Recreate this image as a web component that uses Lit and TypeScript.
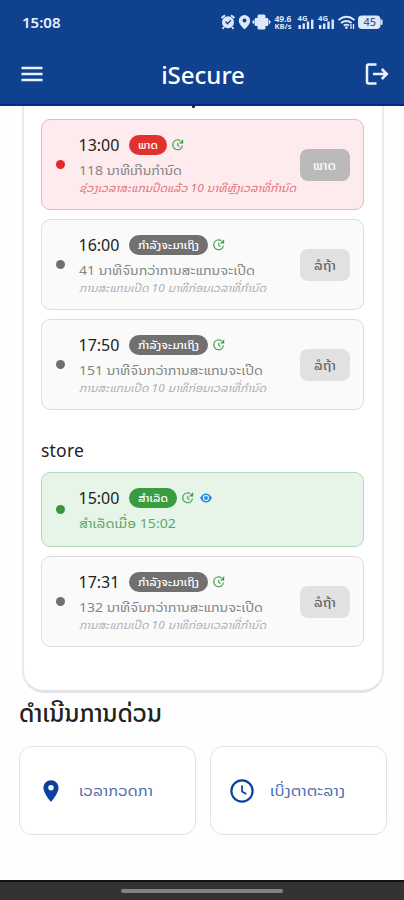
import { LitElement, html, css, svg, nothing } from "lit";
import { customElement, property } from "lit/decorators.js";

type Tone = "missed" | "upcoming" | "done";

interface Slot {
  time: string;
  tone: Tone;
  badge: string;
  badgeWidth: number;
  detail: string;
  detailWidth: number;
  note?: string;
  noteWidth?: number;
  action?: string;
  actionWidth?: number;
}

/* A single line of text set to a known advance width. */
const line = (text: string, width: number, cls: string) => html`<svg class="line ${cls}" width=${width} height="20">
  <text x="0" y="15" textLength=${width} lengthAdjust="spacingAndGlyphs">${text}</text>
</svg>`;

const lineStyles = css`
  .line { display: block; overflow: visible; flex: none; fill: currentColor; }
`;

const wait = { tone: "upcoming" as Tone, badge: "ກຳລັງຈະມາເຖິງ", badgeWidth: 61,
  note: "ການສະແກນເປີດ 10 ນາທີກ່ອນເວລາທີ່ກຳນົດ", noteWidth: 187, action: "ລໍຖ້າ", actionWidth: 22 };

const first: Slot[] = [
  { time: "13:00", tone: "missed", badge: "ພາດ", badgeWidth: 20, detail: "118 ນາທີເກີນກຳນົດ", detailWidth: 103,
    note: "ຊ່ວງເວລາສະແກນປິດແລ້ວ 10 ນາທີຫຼັງເວລາທີ່ກຳນົດ", noteWidth: 217, action: "ພາດ", actionWidth: 23 },
  { ...wait, time: "16:00", detail: "41 ນາທີຈົນກວ່າການສະແກນຈະເປີດ", detailWidth: 176 },
  { ...wait, time: "17:50", detail: "151 ນາທີຈົນກວ່າການສະແກນຈະເປີດ", detailWidth: 184 },
];
const store: Slot[] = [
  { time: "15:00", tone: "done", badge: "ສຳເລັດ", badgeWidth: 30, detail: "ສຳເລັດເມື່ອ 15:02", detailWidth: 97 },
  { ...wait, time: "17:31", detail: "132 ນາທີຈົນກວ່າການສະແກນຈະເປີດ", detailWidth: 184 },
];

@customElement("status-bar")
class StatusBar extends LitElement {
  static styles = css`
    :host { display: flex; height: 44px; align-items: center; padding: 0 21px 0 22px; color: #e8f0ff;
      font-family: "Noto Sans", sans-serif; }
    .time { font-size: 15px; font-weight: 600; flex: 1; line-height: 20px; }
    .icons { display: block; }
    .icons text { font-family: "Noto Sans", sans-serif; font-weight: 700; fill: #dce8fc; }
    .icons .pct { fill: #4a5878; font-weight: 500; }
  `;
  bars(x: number) {
    return svg`<text x=${x} y="6.500" font-size="7.500" textLength="10" lengthAdjust="spacingAndGlyphs">4G</text>
      <rect x=${x + 1} y="11" width="2.400" height="4"/><rect x=${x + 5} y="9.500" width="2.400" height="5.500"/>
      <rect x=${x + 9.3} y="7.500" width="2.400" height="7.500"/><rect x=${x + 13.5} y="5.500" width="2.400" height="9.500"/>`;
  }
  render() {
    return html`<span class="time">15:08</span>
      <svg class="icons" width="163" height="16" viewBox="0 0 163 16" fill="#dce8fc">
        <circle cx="8" cy="8.300" r="6"/><path d="M1.500 4 5 1.200M14.500 4 11 1.200" stroke="#dce8fc" stroke-width="2"/>
        <path d="M4 13l-1.500 1.800M12 13l1.500 1.800" stroke="#dce8fc" stroke-width="1.800"/>
        <path d="M5.500 7.500 7.500 9.800l3.300-3.500" fill="none" stroke="#10418f" stroke-width="1.300"/>
        <path fill-rule="evenodd" d="M24.500 1a5.700 5.700 0 0 0-5.700 5.700c0 3.800 5.700 8.600 5.700 8.600s5.700-4.800 5.700-8.600A5.700 5.700 0 0 0 24.500 1zm0 3.400a2 2 0 1 1 0 4 2 2 0 0 1 0-4z"/>
        <rect x="37.500" y="0.500" width="8" height="15" rx="1.500"/><rect x="35" y="4" width="13" height="8"/><path d="M34.500 5l-2.500 3 2.500 3zM48.500 5l2.500 3-2.500 3z"/>
        <text x="54.500" y="7.500" font-size="8" textLength="17" lengthAdjust="spacingAndGlyphs">49.6</text>
        <text x="54.500" y="15" font-size="7" textLength="17" lengthAdjust="spacingAndGlyphs">KB/s</text>
        ${this.bars(77.5)}${this.bars(98)}
        <g fill="none" stroke="#dce8fc" stroke-width="1.900"><path d="M118.500 6q8-6.500 16 0M121 9q5.300-4 10.600 0M123.700 11.600q2.700-2 5.400 0"/></g>
        <circle cx="126.400" cy="13.600" r="1.400"/><path d="M131 10v5M133.500 10v5" stroke="#dce8fc" stroke-width="1.300"/>
        <rect x="138" y="1.500" width="22.500" height="13.500" rx="4"/><rect x="160.500" y="5.500" width="2" height="5.500" rx="1"/>
        <text class="pct" x="143.500" y="12.200" font-size="11" textLength="12.500" lengthAdjust="spacingAndGlyphs">45</text>
      </svg>`;
  }
}

@customElement("title-bar")
class TitleBar extends LitElement {
  static styles = css`
    :host { display: flex; align-items: center; justify-content: space-between; height: 60px; padding: 0 14px 0 20px;
      color: #fff; font-family: "Noto Sans", sans-serif; }
    .menu { width: 24px; }
    .title { font-size: 24px; font-weight: 500; line-height: 30px; padding: 1px 2px 0 0; }
    svg { display: block; }
  `;
  render() {
    return html`<svg class="menu" width="24" height="18" viewBox="0 0 24 18"><path d="M1.500 3h21M1.500 9h21M1.500 15h21" stroke="#e8f1ff" stroke-width="2.500"/></svg>
      <span class="title">iSecure</span>
      <svg width="26" height="26" viewBox="0 0 26 26" fill="none" stroke="#eaf2ff" stroke-width="2.500">
        <path d="M12.500 3.500H4.500Q3 3.500 3 5v16Q3 22.500 4.500 22.500H12.500M9 13h14M17.800 8l5 5-5 5"/></svg>`;
  }
}

@customElement("slot-card")
class SlotCard extends LitElement {
  @property({ attribute: false }) item!: Slot;
  static styles = [lineStyles, css`
    :host { display: block; font-family: "Noto Sans", "Noto Sans Lao", "DejaVu Sans", sans-serif; }
    .card { box-sizing: border-box; height: 91px; border: 1.500px solid #dedede; border-radius: 9px; background: #fafafa;
      display: flex; align-items: center; padding: 0 13.500px 0 14px; color: #858585; }
    .missed { background: #feebee; border-color: #efb5bc; }
    .done { background: #e7f5e9; border-color: #b4d9b8; height: 75px; color: #5fa568; }
    .dot { width: 9px; height: 9px; border-radius: 50%; background: #707070; flex: none; }
    .missed .dot { background: #e52727; }
    .done .dot { background: #389441; }
    .body { flex: 1; min-width: 0; margin-left: 13.500px; align-self: flex-start; padding-top: 13.500px; }
    .head { display: flex; align-items: center; height: 23px; }
    .time { font-size: 16px; font-weight: 450; color: #222; width: 50px; line-height: 22px; }
    .badge { height: 20px; border-radius: 10px; padding: 0 9px; background: #707070; color: #fff; }
    .missed .badge { background: #e33131; }
    .done .badge { background: #3b9b40; }
    .badge text { font-size: 10.500px; font-weight: 500; }
    .badge .line { transform: translateY(-1px); }
    .refresh { margin-left: 4.500px; }
    .eye { margin-left: 4px; }
    .head svg { flex: none; }
    .detail { margin-top: 3px; }
    .detail text { font-size: 13px; }
    .note { margin-top: -3px; color: #b0b0b0; }
    .missed .note { color: #e0737c; }
    .note text { font-size: 11px; font-style: italic; }
    .button { width: 50px; height: 32px; border-radius: 8px; background: #e1e1e1; color: #666; display: flex;
      align-items: center; justify-content: center; flex: none; }
    .missed .button { background: #bababa; color: #fff; }
    .button text { font-size: 13px; font-weight: 500; }
    .button .line { transform: translateY(-0.500px); }
  `];
  render() {
    const s = this.item;
    return html`<div class="card ${s.tone}">
      <span class="dot"></span>
      <div class="body">
        <div class="head"><span class="time">${s.time}</span>
          <div class="badge">${line(s.badge, s.badgeWidth, "")}</div>
          <svg class="refresh" width="14" height="14" viewBox="0 0 14 14" fill="none" stroke="#4ba855" stroke-width="1.200">
            <path d="M11.500 7.500A4.900 4.900 0 1 1 9.500 2.800M6.700 4.800v2.700l1.800 1"/><path d="M12.200 1.200v4.300H8z" fill="#37a044" stroke="none"/></svg>
          ${s.tone === "done" ? html`<svg class="eye" width="14" height="14" viewBox="0 0 14 14">
            <path d="M1 7Q3.500 2.500 7 2.500T13 7Q10.500 11.500 7 11.500T1 7z" fill="#258ee5"/><circle cx="7" cy="7" r="2.500" fill="#258ee5" stroke="#e7f5e9" stroke-width="1.100"/></svg>` : nothing}
        </div>
        ${line(s.detail, s.detailWidth, "detail")}
        ${s.note ? line(s.note, s.noteWidth!, "note") : nothing}
      </div>
      ${s.action ? html`<div class="button">${line(s.action, s.actionWidth!, "")}</div>` : nothing}
    </div>`;
  }
}

@customElement("app-root")
class AppRoot extends LitElement {
  static styles = [lineStyles, css`
    :host { display: flex; flex-direction: column; height: 900px; overflow: hidden; background: #fefefe; color: #222;
      font-family: "Noto Sans", "Noto Sans Lao", "DejaVu Sans", sans-serif; }
    header { height: 106px; box-sizing: border-box; background: #10418f; border-bottom: 2px solid #062a83; flex: none; }
    .panel { box-sizing: border-box; height: 587px; margin: 0 20.500px 0 22px; flex: none; border: 2px solid #eaeaec; border-top: 0;
      border-bottom: 3px solid #e4e4e6; border-radius: 0 0 22px 22px; background: #fff; padding: 0 17.500px 0 17px; }
    .peek { height: 13px; display: flex; justify-content: center; }
    .peek i { width: 3px; height: 2px; margin-right: 19px; background: #222; border-radius: 0 0 1px 1px; }
    .list { display: flex; flex-direction: column; gap: 9px; }
    h3 { margin: 27px 0 9px; font-size: 17.500px; line-height: 26px; font-weight: 450; letter-spacing: 0.200px; }
    .heading { height: 53px; padding: 13.500px 0 0 19px; box-sizing: border-box; }
    .heading text { font-size: 24px; font-weight: 500; }
    .actions { display: grid; grid-template-columns: 177px 177px; gap: 14px; padding-left: 18.500px; }
    .tile { box-sizing: border-box; height: 89px; border: 1.500px solid #e2e3e5; border-radius: 13px; background: #fff;
      display: flex; align-items: center; padding-left: 18.500px; gap: 14.500px; color: #4a70b0; }
    .tile text { font-size: 14px; }
    .tile .icon { flex: none; }
    footer { margin-top: auto; height: 20px; box-sizing: border-box; border-top: 2px solid #111; background: #333; display: flex; justify-content: center; }
    .grip { width: 162px; height: 4px; margin-top: 7px; background: #838383; border-radius: 2px; }
  `];
  render() {
    return html`<header><status-bar></status-bar><title-bar></title-bar></header>
      <section class="panel">
        <div class="peek"><i></i></div>
        <div class="list">${first.map((s) => html`<slot-card .item=${s}></slot-card>`)}</div>
        <h3>store</h3>
        <div class="list">${store.map((s) => html`<slot-card .item=${s}></slot-card>`)}</div>
      </section>
      <div class="heading">${line("ດຳເນີນການດ່ວນ", 143, "")}</div>
      <div class="actions">
        <div class="tile"><svg class="icon" width="26" height="26" viewBox="0 0 24 24" fill="#0b419d"><path d="M12 2C8.130 2 5 5.130 5 9c0 5.250 7 13 7 13s7-7.750 7-13c0-3.870-3.130-7-7-7zm0 9.500a2.500 2.500 0 1 1 0-5 2.500 2.500 0 0 1 0 5z"/></svg>
          ${line("ເວລາກວດກາ", 74, "")}</div>
        <div class="tile"><svg class="icon" width="26" height="26" viewBox="0 0 24 24" fill="none" stroke="#0b419d" stroke-width="2"><circle cx="12" cy="12" r="9.800"/><path d="M12 7v5.500l4 2.300" stroke-width="1.600"/></svg>
          ${line("ເບິ່ງຕາຕະລາງ", 75, "")}</div>
      </div>
      <footer><span class="grip"></span></footer>`;
  }
}
